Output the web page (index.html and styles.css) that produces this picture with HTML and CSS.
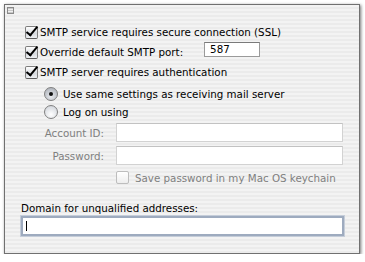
FILE: index.html
```html
<!DOCTYPE html>
<html lang="en">
<head>
    <meta charset="UTF-8">
    <title>SMTP Options</title>
    <link rel="stylesheet" href="styles.css">
</head>
<body>
    <!-- Window -->
    <div class="window">
        <div class="collapse"></div>

        <div class="form">
            <!-- SSL -->
            <div class="row">
                <span class="check on"></span>
                <span class="label">SMTP service requires secure connection (SSL)</span>
            </div>

            <!-- Port -->
            <div class="row">
                <span class="check on"></span>
                <span class="label">Override default SMTP port:</span>
                <span class="port">587</span>
            </div>

            <!-- Auth -->
            <div class="row">
                <span class="check on"></span>
                <span class="label">SMTP server requires authentication</span>
            </div>

            <div class="options">
                <div class="radio-row">
                    <span class="radio on"></span>
                    <span class="label">Use same settings as receiving mail server</span>
                </div>
                <div class="radio-row">
                    <span class="radio"></span>
                    <span class="label">Log on using</span>
                </div>
            </div>

            <div class="login">
                <span class="field-name">Account ID:</span>
                <span class="field off"></span>
                <span class="field-name">Password:</span>
                <span class="field off"></span>
                <span></span>
                <div class="keychain">
                    <span class="check off"></span>
                    <span class="label">Save password in my Mac OS keychain</span>
                </div>
            </div>

            <!-- Domain -->
            <div class="domain">
                <div class="domain-label">Domain for unqualified addresses:</div>
                <div class="domain-field"><span class="caret"></span></div>
            </div>
        </div>
    </div>
</body>
</html>
```
FILE: styles.css
```css
body {
    margin: 0;
    background-color: #ffffff;
    font-family: "DejaVu Sans", sans-serif;
    font-size: 10.3px;
    color: #000;
}

.window {
    margin: 4px 0 0 4px;
    width: 356px;
    height: 250px;
    box-sizing: border-box;
    border: 1px solid #707070;
    padding: 2px 0 0 2px;
    background: repeating-linear-gradient(#f3f3f3 0, #f3f3f3 2px, #ebebeb 2px, #ebebeb 4px);
    box-shadow: 1px 1px 3px rgba(0, 0, 0, 0.55);
}

.collapse {
    width: 7px;
    height: 7px;
    box-sizing: border-box;
    border: 1px solid #8a8a8a;
    background: repeating-linear-gradient(#c8c8c8 0, #c8c8c8 1px, #f0f0f0 1px, #f0f0f0 2px);
}

.form {
    margin-top: 8px;
    padding: 0 15px 0 18px;
}

.row {
    display: flex;
    align-items: center;
    height: 20px;
}

.row .label {
    margin-left: 2px;
}

/* Aqua checkbox */
.check {
    position: relative;
    width: 13px;
    height: 13px;
    box-sizing: border-box;
    border: 1px solid #7d7d7d;
    border-bottom-color: #5c5c5c;
    border-radius: 2px;
    background: linear-gradient(#ffffff, #d6d9de 60%, #eef0f3);
    flex: none;
}

.check.on::after {
    content: "";
    position: absolute;
    left: 3px;
    top: -3px;
    width: 4px;
    height: 10px;
    border: solid #000;
    border-width: 0 2px 2px 0;
    transform: rotate(40deg);
}

.check.off {
    border-color: #bdbdbd;
    background: linear-gradient(#ffffff, #eeeeee);
}

.port {
    margin-left: 21px;
    align-self: flex-start;
    width: 56px;
    height: 15px;
    box-sizing: border-box;
    border: 1px solid #9a9a9a;
    border-top-color: #7a7a7a;
    background: #fff;
    padding-left: 5px;
    line-height: 13px;
}

.options {
    margin-top: 3px;
    padding-left: 19px;
}

.radio-row {
    display: flex;
    align-items: center;
    height: 18px;
}

.radio-row .label {
    margin-left: 5px;
}

/* Aqua radio */
.radio {
    position: relative;
    width: 14px;
    height: 14px;
    box-sizing: border-box;
    border: 1px solid #808080;
    border-radius: 50%;
    background: radial-gradient(circle at 50% 70%, #ffffff, #dadde2 70%, #c4c7cc);
    flex: none;
}

.radio.on {
    background: radial-gradient(circle at 50% 70%, #e8eaee, #b9bdc4 70%, #9ea3aa);
}

.radio.on::after {
    content: "";
    position: absolute;
    left: 4px;
    top: 4px;
    width: 4px;
    height: 4px;
    border-radius: 50%;
    background: #111;
}

.login {
    margin-top: 2px;
    display: grid;
    grid-template-columns: 79px 227px;
    column-gap: 12px;
    row-gap: 4px;
    align-items: center;
}

.field-name {
    text-align: right;
    color: #7f7f7f;
}

.field {
    height: 19px;
    box-sizing: border-box;
    background: #fff;
    border: 1px solid #d2d2d2;
    border-top-color: #c2c2c2;
}

.keychain {
    display: flex;
    align-items: center;
    height: 17px;
    color: #7f7f7f;
}

.keychain .label {
    margin-left: 6px;
}

.domain {
    margin: 14px 0 0 -4px;
}

.domain-label {
    height: 16px;
    line-height: 16px;
}

.domain-field {
    display: flex;
    align-items: center;
    height: 20px;
    box-sizing: border-box;
    border: 2px solid #9eabbf;
    box-shadow: 0 0 0 1px #c5cdd9;
    background: #fff;
    padding-left: 3px;
}

.caret {
    width: 1px;
    height: 10px;
    background: #000;
}
```
